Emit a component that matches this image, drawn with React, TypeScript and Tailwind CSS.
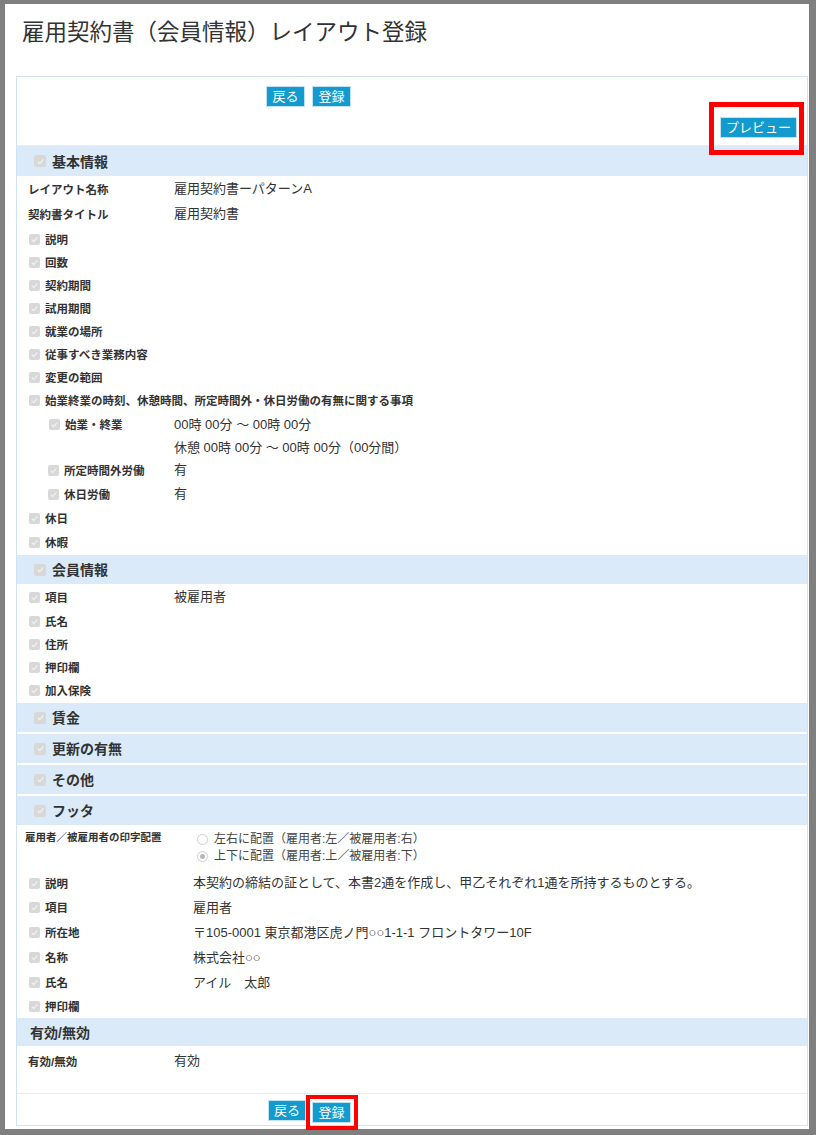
import React from "react";

const Check = ({ size = 11 }: { size?: number }) => (
  <span
    className={`inline-flex shrink-0 items-center justify-center rounded-[2px] bg-[#d8d8d8] ${size === 12 ? "h-[12px] w-[12px]" : "h-[11px] w-[11px]"}`}
  >
    <svg viewBox="0 0 10 10" className="h-[9px] w-[9px]">
      <path d="M2 5.3 L4.2 7.4 L8.1 2.7" fill="none" stroke="#f2f2f2" strokeWidth="1.3" />
    </svg>
  </span>
);

const Radio = ({ on }: { on?: boolean }) => (
  <span className="inline-flex h-[11px] w-[11px] shrink-0 items-center justify-center rounded-full border border-[#cfcfcf] bg-white">
    {on && <span className="h-[5px] w-[5px] rounded-full bg-[#b8b8b8]" />}
  </span>
);

const Btn = ({ children, w = "w-[39px]" }: { children: React.ReactNode; w?: string }) => (
  <button className={`h-[21px] ${w} border border-[#bfe3f3] bg-[#139ace] text-[13px] leading-[19px] text-white`}>
    {children}
  </button>
);

const Section = ({ title, check = true, h = "h-[29px]" }: { title: string; check?: boolean; h?: string }) => (
  <div className={`flex ${h} items-center gap-[6px] bg-[#dbeaf8] ${check ? "pl-[17px]" : "pl-[13px]"}`}>
    {check && <Check size={12} />}
    <span className="pt-[1px] text-[14px] font-bold leading-[20px] text-[#333]">{title}</span>
  </div>
);

type RowProps = {
  h: string;
  label: string;
  value?: React.ReactNode;
  check?: boolean;
  indent?: boolean;
  lw?: string;
};

const Row = ({ h, label, value, check = true, indent = false, lw = "w-[146px]" }: RowProps) => (
  <div className={`flex ${h} items-center pl-[11px] pt-[2px]`}>
    <div className={`flex ${lw} shrink-0 items-center ${indent ? "pl-[20px]" : ""} ${check ? "gap-[5px] pl-[1px]" : ""}`}>
      {check && <Check />}
      <span className="pt-[1px] text-[11.5px] font-bold leading-[18px] text-[#333]">{label}</span>
    </div>
    {value && <div className="text-[13px] leading-[18px] text-[#333]">{value}</div>}
  </div>
);

export default function App() {
  return (
    <div className="h-[1135px] w-[816px] bg-[#7f7f7f] pb-[6px] pl-[5px] pr-[7px] pt-[4px] font-['Liberation_Sans','Noto_Sans_CJK_JP',sans-serif]">
      <div className="flex h-full flex-col bg-white">
        <div className="h-[72px] pl-[17px] pt-[15px]">
          <h1 className="text-[22.5px] font-normal leading-[28px] text-[#333]">
            雇用契約書（会員情報）レイアウト登録
          </h1>
        </div>

        <div className="ml-[11px] mr-[1px] flex h-[1050px] flex-col border border-[#cfe3f5]">
          {/* top buttons */}
          <div className="h-[69px] border-b border-[#e3eef8]">
            <div className="flex gap-[7px] pl-[249px] pt-[9px]">
              <Btn>戻る</Btn>
              <Btn>登録</Btn>
            </div>
            <div className="flex justify-end pr-[10px] pt-[8px]">
              <div className="relative">
                <Btn w="w-[77px]">プレビュー</Btn>
                <span className="pointer-events-none absolute -bottom-[16px] -left-[11px] -right-[7px] -top-[13px] border-[5px] border-[#ff0000]" />
              </div>
            </div>
          </div>

          <Section title="基本情報" h="h-[30px]" />
          <Row h="h-[24px]" check={false} label="レイアウト名称" value="雇用契約書ーパターンA" />
          <Row h="h-[26px]" check={false} label="契約書タイトル" value="雇用契約書" />
          <div className="h-[1px]" />
          <Row h="h-[23px]" label="説明" />
          <Row h="h-[23px]" label="回数" />
          <Row h="h-[23px]" label="契約期間" />
          <Row h="h-[23px]" label="試用期間" />
          <Row h="h-[23px]" label="就業の場所" />
          <Row h="h-[23px]" label="従事すべき業務内容" />
          <Row h="h-[23px]" label="変更の範囲" />
          <Row h="h-[23px]" label="始業終業の時刻、休憩時間、所定時間外・休日労働の有無に関する事項" lw="w-auto" />
          <div className="flex h-[46px] items-start pl-[11px] pt-[2px]">
            <div className="flex h-[23px] w-[146px] shrink-0 items-center gap-[5px] pl-[21px]">
              <Check />
              <span className="pt-[1px] text-[11.5px] font-bold leading-[18px] text-[#333]">始業・終業</span>
            </div>
            <div className="text-[13px] leading-[23px] text-[#333]">
              <div>00時 00分 〜 00時 00分</div>
              <div>休憩 00時 00分 〜 00時 00分（00分間）</div>
            </div>
          </div>
          <Row h="h-[24px]" indent label="所定時間外労働" value="有" />
          <Row h="h-[24px]" indent label="休日労働" value="有" />
          <Row h="h-[25px]" label="休日" />
          <Row h="h-[23px]" label="休暇" />
          <div className="h-[2px]" />

          <Section title="会員情報" />
          <Row h="h-[24px]" label="項目" value="被雇用者" />
          <Row h="h-[24px]" label="氏名" />
          <Row h="h-[23px]" label="住所" />
          <Row h="h-[23px]" label="押印欄" />
          <Row h="h-[23px]" label="加入保険" />
          <div className="h-[2px]" />

          <Section title="賃金" />
          <div className="h-[2px]" />
          <Section title="更新の有無" />
          <div className="h-[2px]" />
          <Section title="その他" />
          <div className="h-[2px]" />
          <Section title="フッタ" />

          <div className="flex h-[45px] items-start pl-[8px] pt-[4px]">
            <div className="w-[172px] shrink-0 pt-[0px] text-[10.5px] font-bold leading-[17px] text-[#333]">
              雇用者／被雇用者の印字配置
            </div>
            <div className="flex flex-col pt-[2px] text-[12px] leading-[17px] text-[#444]">
              <div className="flex items-center gap-[6px]">
                <Radio />
                <span>左右に配置（雇用者:左／被雇用者:右）</span>
              </div>
              <div className="flex items-center gap-[6px]">
                <Radio on />
                <span>上下に配置（雇用者:上／被雇用者:下）</span>
              </div>
            </div>
          </div>
          <Row h="h-[24px]" lw="w-[165px]" label="説明" value="本契約の締結の証として、本書2通を作成し、甲乙それぞれ1通を所持するものとする。" />
          <Row h="h-[25px]" lw="w-[165px]" label="項目" value="雇用者" />
          <Row h="h-[25px]" lw="w-[165px]" label="所在地" value="〒105-0001 東京都港区虎ノ門○○1-1-1 フロントタワー10F" />
          <Row h="h-[25px]" lw="w-[165px]" label="名称" value="株式会社○○" />
          <Row h="h-[25px]" lw="w-[165px]" label="氏名" value="アイル　太郎" />
          <Row h="h-[23px]" lw="w-[165px]" label="押印欄" />
          <div className="h-[1px]" />

          <Section title="有効/無効" check={false} h="h-[28px]" />
          <div className="h-[2px]" />
          <Row h="h-[24px]" check={false} label="有効/無効" value="有効" />

          <div className="mt-auto flex h-[32px] gap-[6px] border-t border-[#e3eef8] pl-[251px] pt-[6px]">
            <Btn w="w-[38px]">戻る</Btn>
            <div className="relative">
              <Btn w="w-[39px]">登録</Btn>
              <span className="pointer-events-none absolute -bottom-[5px] -left-[6px] -right-[7px] -top-[5px] border-[4px] border-[#ff0000]" />
            </div>
          </div>
        </div>
      </div>
    </div>
  );
}
